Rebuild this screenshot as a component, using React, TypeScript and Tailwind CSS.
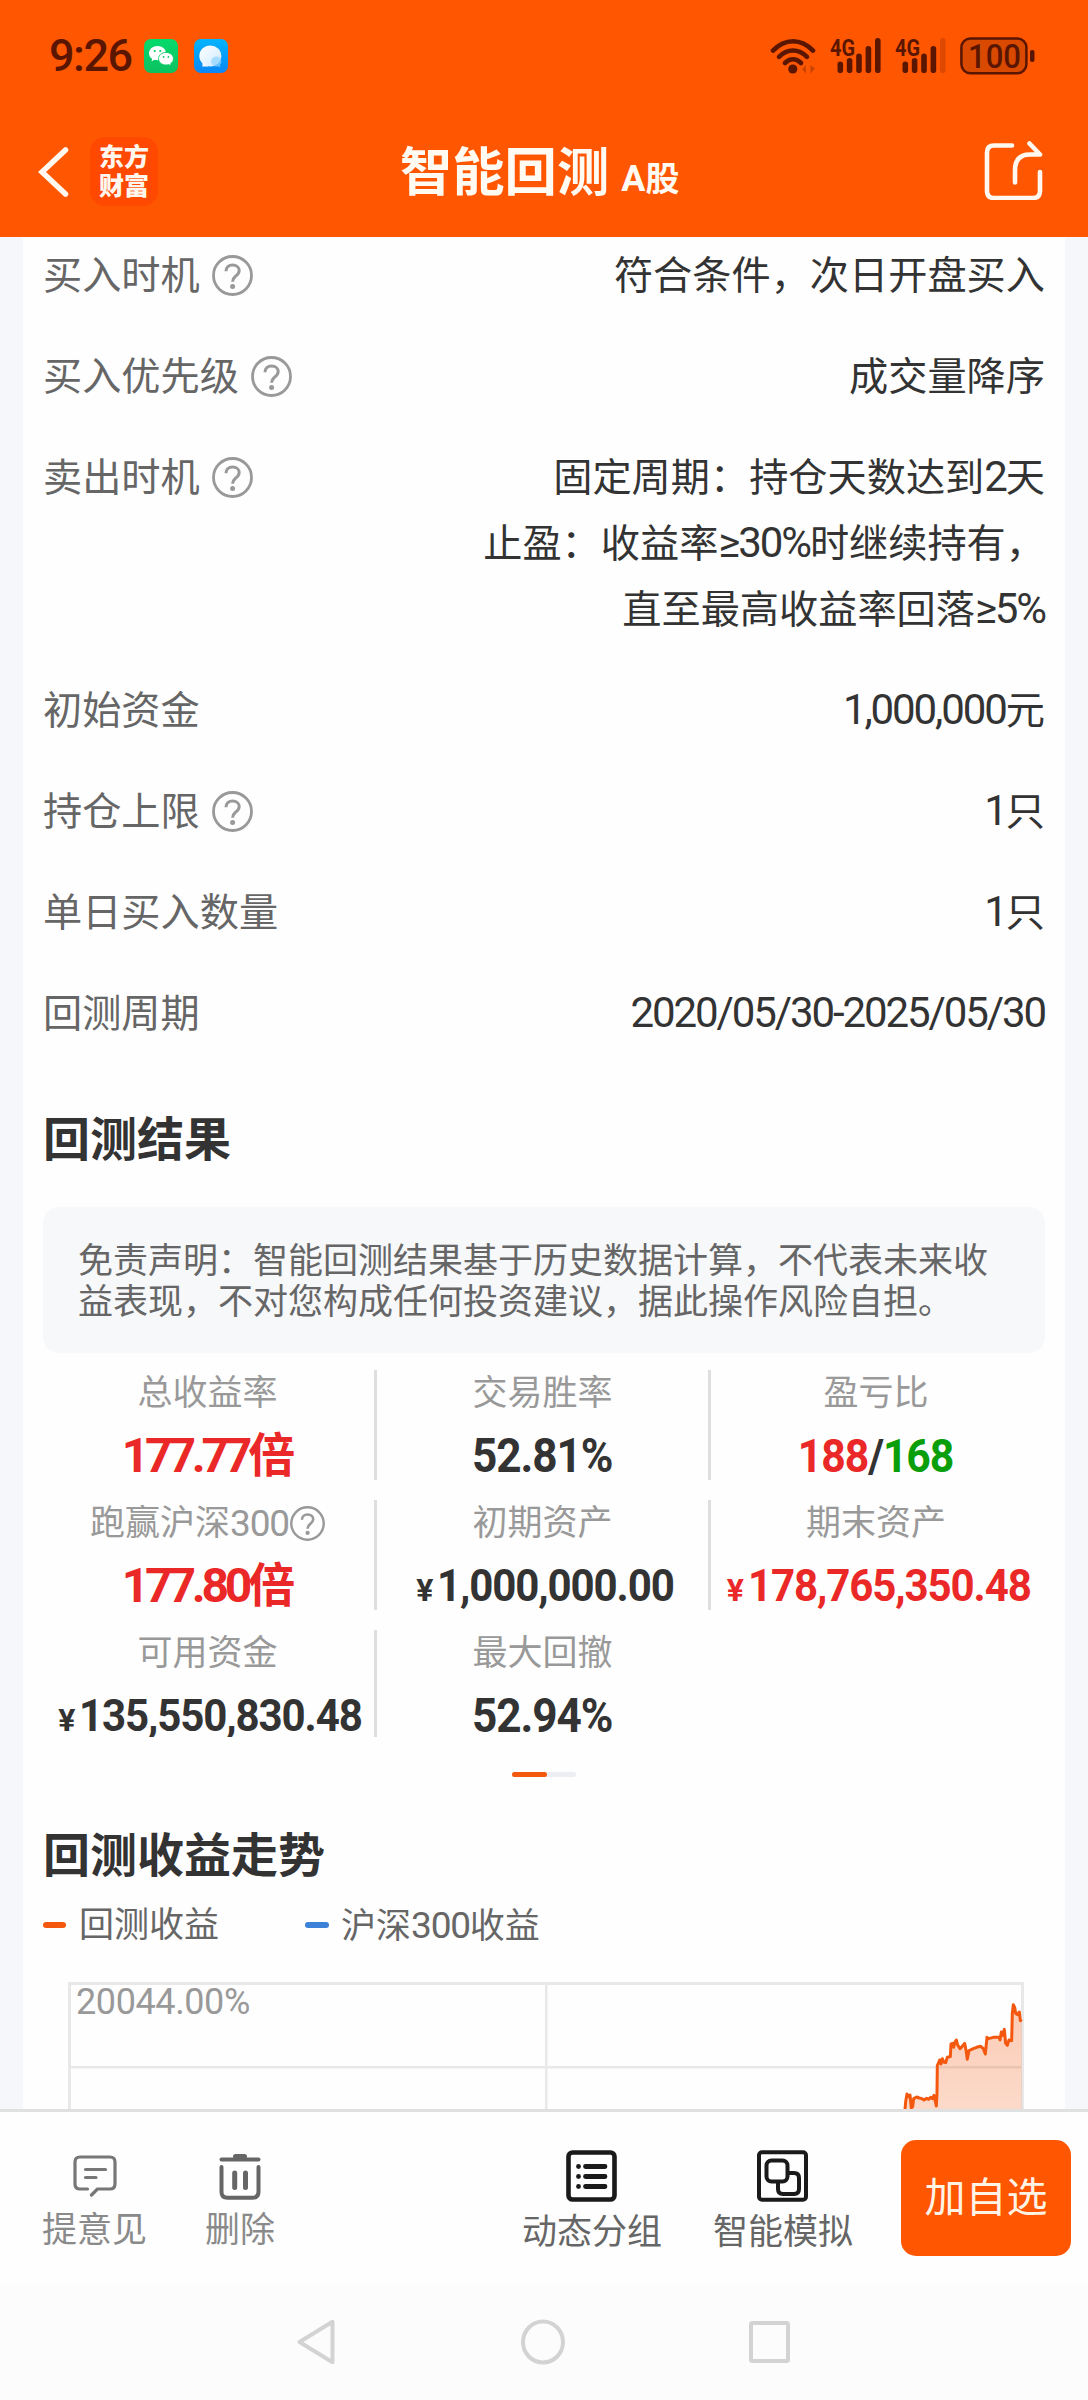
import type { ReactNode } from "react";

/* ---------- small shared pieces ---------- */

function Help({ className }: { className: string }) {
  return (
    <svg viewBox="0 0 41 41" className={className} fill="none" stroke="#999" strokeWidth="2.8">
      <circle cx="20.5" cy="20.5" r="19" />
      <path d="M14 16.2c0-3.9 2.8-6.3 6.6-6.3s6.6 2.4 6.6 5.7c0 3-1.9 4.3-3.9 5.9-1.9 1.6-2.7 2.7-2.7 5.2" strokeWidth="3" />
      <circle cx="20.6" cy="31.6" r="2.5" fill="#999" stroke="none" />
    </svg>
  );
}

function Num({ children }: { children: ReactNode }) {
  return <span className="text-[42px] leading-none tracking-[-2.1px]">{children}</span>;
}

/* ---------- header ---------- */

function Bars({ faded }: { faded?: boolean }) {
  return (
    <svg viewBox="0 0 52 36" className="h-9 w-[52px] overflow-visible" fill="#5a1600">
      <text x="0" y="17.5" fontSize="24" fontWeight="700" textLength="25" lengthAdjust="spacingAndGlyphs">
        4G
      </text>
      <rect x="7.5" y="23.5" width="5.6" height="11.5" rx="2.8" />
      <rect x="16.8" y="20" width="5.6" height="15" rx="2.8" />
      <rect x="26.2" y="15.5" width="5.6" height="19.5" rx="2.8" />
      <rect x="35.6" y="8" width="5.6" height="27" rx="2.8" />
      <rect x="45" y="0" width="5.6" height="35" rx="2.8" opacity={faded ? 0.2 : 1} />
    </svg>
  );
}

function StatusBar() {
  return (
    <div className="flex h-28 items-center pl-[49px] pr-[53px] text-[#5a1600]">
      <span className="w-[95px] text-[45px] font-medium leading-[52px] tracking-[-1.5px]">9:26</span>
      <svg viewBox="0 0 34 34" className="h-[34px] w-[34px]">
        <defs>
          <linearGradient id="wx" x1="0" y1="0" x2="0" y2="1">
            <stop offset="0" stopColor="#04da6c" />
            <stop offset="1" stopColor="#0cc160" />
          </linearGradient>
        </defs>
        <rect width="34" height="34" rx="7" fill="url(#wx)" />
        <path d="M13.5 7C8.8 7 5 10.200 5 14.200c0 2.300 1.200 4.200 3.100 5.500L7.600 22.300l3-1.500c.9.300 1.900.4 2.900.4 4.700 0 8.400-3.100 8.400-7.100S18.200 7 13.500 7z" fill="#fff" />
        <path d="M22 13.400c-4.200 0-7.500 2.800-7.500 6.300s3.300 6.300 7.500 6.300c.9 0 1.800-.1 2.600-.4l2.500 1.300-.5-2.200c1.800-1.200 2.900-3 2.900-5 0-3.500-3.300-6.300-7.500-6.300z" fill="#fff" stroke="#08cc66" strokeWidth="0.900" />
        <g fill="#08c864">
          <circle cx="10.700" cy="12" r="1.100" />
          <circle cx="16.300" cy="12" r="1.100" />
          <circle cx="19.600" cy="17.900" r="0.900" />
          <circle cx="24.400" cy="17.900" r="0.900" />
        </g>
      </svg>
      <svg viewBox="0 0 34 34" className="ml-4 h-[34px] w-[34px]">
        <defs>
          <linearGradient id="msg" x1="0" y1="0" x2="0" y2="1">
            <stop offset="0" stopColor="#02b4ff" />
            <stop offset="1" stopColor="#0a86f5" />
          </linearGradient>
          <linearGradient id="bub" x1="0" y1="0" x2="1" y2="1">
            <stop offset="0" stopColor="#fff" />
            <stop offset="1" stopColor="#cdeaff" />
          </linearGradient>
        </defs>
        <rect width="34" height="34" rx="7" fill="url(#msg)" />
        <ellipse cx="16.300" cy="17" rx="11" ry="10.500" fill="url(#bub)" />
        <path d="M9 22.500 8.200 27.500h6z" fill="#eef8ff" />
        <path d="M22.500 17.500a5 5 0 1 0 1 9.800l3 1-.6-2.300a5 5 0 0 0-3.400-8.500z" fill="#8fd3ff" opacity="0.700" />
      </svg>

      <div className="ml-auto flex items-center">
        <svg viewBox="0 0 46 36" className="h-9 w-[46px]" fill="none" stroke="#5a1600" strokeWidth="4.600" strokeLinecap="round">
          <path d="M3 12.600Q12 3.200 23 3.200t20 9.400" />
          <path d="M9 18.800q6.200-6.300 14-6.300t14 6.300" />
          <path d="M15 25q3.700-3.700 8-3.700t8 3.700" />
          <circle cx="22.800" cy="31" r="4.600" fill="#5a1600" stroke="none" />
          <path d="M36 27v8.500l-4-4.200zM40.500 27v8.500l4.500-5z" fill="#c94400" stroke="none" />
        </svg>
        <div className="ml-3.5"><Bars /></div>
        <div className="ml-[13px]"><Bars faded /></div>
        <svg viewBox="0 0 75 38" className="ml-[13px] h-[38px] w-[75px] overflow-visible">
          <rect x="1.400" y="1.400" width="65" height="34.800" rx="9" fill="#d94a00" stroke="#5a1600" strokeWidth="2.500" />
          <text x="8" y="31" fontSize="33.500" fontWeight="500" fill="#5a1600" textLength="53" lengthAdjust="spacingAndGlyphs">
            100
          </text>
          <rect x="70" y="13" width="4.500" height="12" rx="2" fill="#5a1600" />
        </svg>
      </div>
    </div>
  );
}

function Header() {
  return (
    <header className="h-[237px] shrink-0 bg-[#ff5601]">
      <StatusBar />
      <div className="flex h-[119px] items-center pl-[38px] pr-[45px] text-white">
        <svg viewBox="0 0 32 52" className="h-[52px] w-8" fill="none" stroke="#fff8f0" strokeWidth="5.500" strokeLinecap="round">
          <path d="M27.500 4 4 26l23.500 22" strokeLinejoin="miter" />
        </svg>
        <div className="ml-5 h-[69px] w-[68px] rounded-[15px] bg-[#ff4800] pt-[7px] text-center text-[25px] font-black leading-[28.500px] text-[#fff6ee]">
          <div>东方</div>
          <div>财富</div>
        </div>
        <div className="ml-[242px] flex translate-y-px items-baseline whitespace-nowrap font-bold text-[#fffaf2]">
          <span className="text-[52.300px] leading-[58px]">智能回测</span>
          <span className="ml-3 text-[34px] leading-[40px]"><span className="text-[36px]">A</span>股</span>
        </div>
        <svg viewBox="0 0 59 60" className="ml-auto h-[60px] w-[59px] -translate-y-0.5" fill="none" stroke="#fff8f0" strokeWidth="4.600" strokeLinecap="round" strokeLinejoin="round">
          <path d="M28 5.500H10q-7 0-7 7v38.500q0 7 7 7h39q7 0 7-7V32" />
          <path d="M45.500 3.500 56 14.500H46q-15 0-15 16V42.500" />
        </svg>
      </div>
    </header>
  );
}

/* ---------- strategy parameters ---------- */

function Row({ label, help, children }: { label: string; help?: boolean; children: ReactNode }) {
  return (
    <div className="mb-[35px] flex justify-between text-[39.200px] leading-[66px]">
      <div className="flex h-[66px] items-center text-[#666]">
        {label}
        {help && <Help className="ml-3 h-[41px] w-[41px] -translate-y-px" />}
      </div>
      <div className="text-right text-[#333]">{children}</div>
    </div>
  );
}

function Params() {
  return (
    <section className="pt-1.5">
      <Row label="买入时机" help>符合条件，次日开盘买入</Row>
      <Row label="买入优先级" help>成交量降序</Row>
      <Row label="卖出时机" help>
        <div>固定周期：持仓天数达到<Num>2</Num>天</div>
        <div>止盈：收益率<Num>≥30%</Num>时继续持有，</div>
        <div>直至最高收益率回落<Num>≥5%</Num></div>
      </Row>
      <Row label="初始资金"><Num>1,000,000</Num>元</Row>
      <Row label="持仓上限" help><Num>1</Num>只</Row>
      <Row label="单日买入数量"><Num>1</Num>只</Row>
      <Row label="回测周期"><Num>2020/05/30-2025/05/30</Num></Row>
    </section>
  );
}

/* ---------- result grid ---------- */

function Cell({ label, divider, children }: { label: ReactNode; divider?: boolean; children: ReactNode }) {
  return (
    <div className={divider ? "border-r-[3px] border-[#dedede]" : "border-r-[3px] border-transparent"}>
      <div className="flex h-[47px] items-center justify-center text-[35px] leading-[47px] text-[#999]">{label}</div>
      <div className="mt-[15px] flex h-12 items-baseline justify-center whitespace-nowrap text-[48px] font-bold leading-[48px] text-[#333]">
        {children}
      </div>
    </div>
  );
}

function Multiple({ value }: { value: string }) {
  return (
    <span className="pl-0.5 text-[#eb2828]">
      <span className="tracking-[-4.200px]">{value}</span>
      <span className="text-[47px]">倍</span>
    </span>
  );
}

function Percent({ value }: { value: string }) {
  return <span className="inline-block scale-x-[0.92] tracking-[-1.200px]">{value}</span>;
}

function Money({ value, red, short }: { value: string; red?: boolean; short?: boolean }) {
  return (
    <span className={red ? "flex items-baseline pl-[7px] text-[#eb2828]" : "flex items-baseline pl-[7px]"}>
      <span className="text-[32px] leading-[48px]">¥</span>
      <span className={short ? "-mr-[15px] ml-1 origin-left scale-x-[0.935] text-[45px] tracking-[-1.200px]" : "-mr-[18px] ml-1 origin-left scale-x-[0.935] text-[45px] tracking-[-1.200px]"}>
        {value}
      </span>
    </span>
  );
}

function Results() {
  return (
    <section>
      <h2 className="mt-[58px] text-[47px] font-bold leading-[70px] text-[#333]">回测结果</h2>
      <p className="mt-8 h-[146px] rounded-2xl bg-[#f7f8fa] px-[35px] pt-[34px] text-[35px] leading-[41px] text-[#666]">
        免责声明：智能回测结果基于历史数据计算，不代表未来收益表现，不对您构成任何投资建议，据此操作风险自担。
      </p>
      <div className="-mx-0.5 mt-[17px] grid h-[367px] grid-cols-[336px_334px_333px] grid-rows-[110px_110px_107px] gap-y-5 overflow-hidden">
        <Cell label="总收益率" divider><Multiple value="177.77" /></Cell>
        <Cell label="交易胜率" divider><Percent value="52.81%" /></Cell>
        <Cell label="盈亏比">
          <span className="inline-block scale-x-[0.93] text-[46px] tracking-[-1.200px]">
            <span className="text-[#eb2828]">188</span>/<span className="text-[#0a9f0a]">168</span>
          </span>
        </Cell>
        <Cell
          divider
          label={
            <>
              跑赢沪深<span className="text-[37px] tracking-[-1.200px]">300</span>
              <Help className="ml-px h-[35px] w-[35px]" />
            </>
          }
        >
          <Multiple value="177.80" />
        </Cell>
        <Cell label="初期资产" divider><Money value="1,000,000.00" short /></Cell>
        <Cell label="期末资产"><Money value="178,765,350.48" red /></Cell>
        <Cell label="可用资金" divider><Money value="135,550,830.48" /></Cell>
        <Cell label="最大回撤"><Percent value="52.94%" /></Cell>
      </div>
      <div className="mx-auto mt-[35px] h-[5px] w-16 rounded-full bg-[#eceef4]">
        <div className="h-full w-[35px] rounded-full bg-[#f4580f]" />
      </div>
    </section>
  );
}

/* ---------- trend chart ---------- */

const CURVE =
  "135,450 137,425 141,402 146,410 150,405 154,444 158,440 161,416 170,411 178,414 186,416 192,420 200,415 206,418 212,412 218,416 222,406 225,420 229,438 231,400 232,316 236,308 239,300 243,312 247,296 251,306 257,308 262,292 271,290 273,252 279,250 281,262 285,246 289,240 293,255 300,266 306,260 314,250 318,270 322,298 327,272 340,266 350,262 362,259 370,266 376,282 381,232 386,236 400,232 418,232 420,240 424,216 428,226 433,208 437,250 442,256 447,240 455,242 457,160 460,134 464,142 467,160 472,164 478,156 481,182 485,178";

function Chart() {
  return (
    <div className="relative ml-[25px] mt-[30px] h-[127px] w-[956px]">
      <svg viewBox="0 0 956 127" className="block h-[127px] w-[956px] overflow-hidden">
        <defs>
          <linearGradient id="area" x1="0" y1="0" x2="0" y2="1">
            <stop offset="0" stopColor="#f4580f" stopOpacity="0.300" />
            <stop offset="1" stopColor="#f4580f" stopOpacity="0.220" />
          </linearGradient>
        </defs>
        <g fill="#e8e8e8">
          <rect width="956" height="3" />
          <rect width="3" height="127" />
          <rect x="953" width="3" height="127" />
          <rect x="477" width="2.500" height="127" />
          <rect y="84" width="956" height="2.500" />
        </g>
        <g transform="translate(792 -22) scale(0.3333)">
          <polygon points={`${CURVE} 485,450`} fill="url(#area)" />
          <polyline points={CURVE} fill="none" stroke="#f4580f" strokeWidth="9" strokeLinejoin="round" />
        </g>
      </svg>
      <span className="absolute left-2 top-0.5 text-[36px] leading-9 tracking-[-0.400px] text-[#999]">20044.00%</span>
    </div>
  );
}

function Trend() {
  return (
    <section>
      <h2 className="mt-11 text-[47px] font-bold leading-[70px] text-[#333]">回测收益走势</h2>
      <div className="mt-[11px] flex h-[50px] items-center text-[35px] leading-[50px] text-[#666]">
        <span className="h-1.5 w-[23px] -translate-y-0.5 rounded-sm bg-[#f4580f]" />
        <span className="ml-[13px] -translate-y-px">回测收益</span>
        <span className="ml-[86px] h-1.5 w-6 -translate-y-0.5 rounded-sm bg-[#3b82d8]" />
        <span className="ml-3 -translate-y-px">沪深<span className="text-[37px] tracking-[-1.200px]">300</span>收益</span>
      </div>
      <Chart />
    </section>
  );
}

/* ---------- bottom bars ---------- */

function ActionBar() {
  return (
    <footer className="flex h-[174px] shrink-0 border-t-[3px] border-[#e0e0e0] bg-[#fefefe] pl-[42px] pr-[17px] text-[35px] leading-10">
      <div className="flex flex-col items-center pt-[38px] text-[#8a8a8a]">
        <div className="flex h-[52px] items-center">
          <svg viewBox="0 0 44 42" className="h-[42px] w-11" fill="none" stroke="#777" strokeWidth="3.200" strokeLinecap="round" strokeLinejoin="round">
            <path d="M14.500 34H7q-5 0-5-5V7q0-5 5-5h30q5 0 5 5v22q0 5-5 5H24.500L18.500 40" />
            <path d="M12.500 14.500h20M12.500 22.500h10.500" />
          </svg>
        </div>
        <span className="mt-[9px]">提意见</span>
      </div>
      <div className="ml-[58px] flex flex-col items-center pt-[38px] text-[#8a8a8a]">
        <div className="flex h-[52px] items-center">
          <svg viewBox="0 0 42 47" className="h-[47px] w-[42px]" fill="none" stroke="#666" strokeWidth="4" strokeLinecap="round">
            <path d="M2.500 6.500h37" />
            <path d="M16.500 3.500h9" strokeWidth="5" />
            <path d="M2.500 14v25q0 5.800 6 5.800h25q6 0 6-5.800V14" />
            <path d="M15.700 20v14.500M26.500 20v14.500" strokeWidth="5" />
          </svg>
        </div>
        <span className="mt-[9px]">删除</span>
      </div>

      <div className="ml-auto flex flex-col items-center pt-[38px] text-[#666]">
        <svg viewBox="0 0 51 52" className="h-[52px] w-[51px]" fill="none" stroke="#1a1a1a" strokeWidth="4.600">
          <rect x="2.500" y="2.500" width="46" height="47" rx="4" />
          <path d="M19.500 16.500h19.500M19.500 26.500h19.500M19.500 36.500h19.500" strokeLinecap="round" strokeWidth="4.800" />
          <g fill="#1a1a1a" stroke="none">
            <circle cx="12.500" cy="16.500" r="2.400" />
            <circle cx="12.500" cy="26.500" r="2.400" />
            <circle cx="12.500" cy="36.500" r="2.400" />
          </g>
        </svg>
        <span className="mt-[11px]">动态分组</span>
      </div>
      <div className="ml-[51px] flex flex-col items-center pt-[38px] text-[#666]">
        <svg viewBox="0 0 51 52" className="h-[52px] w-[51px]" fill="none" stroke="#1a1a1a" strokeWidth="4">
          <rect x="2" y="2.300" width="47" height="47.400" rx="3" />
          <path d="M31.500 23H37q5 0 5 5v11q0 5-5 5H26q-5 0-5-5v-7.500" />
          <rect x="9.500" y="10.500" width="21" height="21" rx="5" />
        </svg>
        <span className="mt-[11px]">智能模拟</span>
      </div>
      <button className="ml-12 mt-7 h-[116px] w-[170px] rounded-[15px] bg-[#ff5601] text-[41px] leading-[58px] text-[#fff3e6]">
        加自选
      </button>
    </footer>
  );
}

function SystemNav() {
  return (
    <nav className="flex h-[117px] shrink-0 items-center bg-[#fcfcfc] pl-[296px]">
      <svg viewBox="0 0 41 46" className="h-[46px] w-[41px]" fill="none" stroke="#d3d3d3" strokeWidth="4" strokeLinejoin="round">
        <path d="M36.500 2.800v40.400L3.500 23z" />
      </svg>
      <svg viewBox="0 0 44 46" className="ml-[184px] h-[46px] w-11" fill="none" stroke="#d3d3d3" strokeWidth="4">
        <ellipse cx="22" cy="23" rx="20" ry="20.500" />
      </svg>
      <svg viewBox="0 0 42 42" className="ml-[184px] h-[42px] w-[42px]" fill="none" stroke="#d3d3d3" strokeWidth="4">
        <rect x="2" y="2" width="37" height="38" rx="1.500" />
      </svg>
    </nav>
  );
}

export default function App() {
  return (
    <div className="flex h-[2400px] w-[1088px] flex-col overflow-hidden bg-[#f6f7fa] font-[Roboto,'Noto_Sans_CJK_SC',sans-serif]">
      <Header />
      <main className="mx-[23px] min-h-0 flex-1 overflow-hidden bg-[#fefefe] px-5">
        <Params />
        <Results />
        <Trend />
      </main>
      <ActionBar />
      <SystemNav />
    </div>
  );
}
